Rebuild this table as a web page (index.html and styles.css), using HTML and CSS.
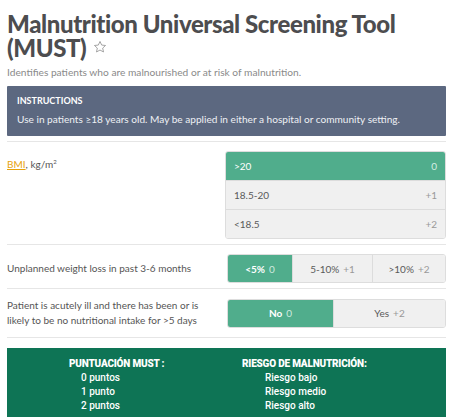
FILE: index.html
```html
<!DOCTYPE html>
<html>
<head>
<meta charset="utf-8">
<link rel="stylesheet" href="styles.css">
</head>
<body>
<div class="page">
  <h1 class="title">Malnutrition Universal Screening Tool (MUST) <svg class="star" viewBox="0 0 24 24" width="14" height="14"><path d="M12 2.5l2.9 6.2 6.6.7-4.9 4.5 1.4 6.6L12 17.2l-6 3.3 1.4-6.6-4.9-4.5 6.6-.7z" fill="none" stroke="#888" stroke-width="1.3" stroke-linejoin="round"/></svg></h1>
  <p class="subtitle">Identifies patients who are malnourished or at risk of malnutrition.</p>
  <div class="instructions">
    <div class="inst-head">INSTRUCTIONS</div>
    <div class="inst-text">Use in patients ≥18 years old. May be applied in either a hospital or community setting.</div>
  </div>
  <div class="row row-bmi">
    <div class="label"><span class="bmi">BMI</span>, kg/m<sup>2</sup></div>
    <div class="stack">
      <div class="opt active"><span>&gt;20</span><span class="pts">0</span></div>
      <div class="opt"><span>18.5-20</span><span class="pts">+1</span></div>
      <div class="opt"><span>&lt;18.5</span><span class="pts">+2</span></div>
    </div>
  </div>
  <div class="row row-center">
    <div class="label">Unplanned weight loss in past 3-6 months</div>
    <div class="seg seg3">
      <div class="btn active">&lt;5% <span class="pts">0</span></div>
      <div class="btn">5-10% <span class="pts">+1</span></div>
      <div class="btn">&gt;10% <span class="pts">+2</span></div>
    </div>
  </div>
  <div class="row row-center">
    <div class="label">Patient is acutely ill and there has been or is likely to be no nutritional intake for &gt;5 days</div>
    <div class="seg seg2">
      <div class="btn active bold">No <span class="pts">0</span></div>
      <div class="btn">Yes <span class="pts">+2</span></div>
    </div>
  </div>
  <div class="result">
    <div class="col col1">
      <div class="rhead">PUNTUACIÓN MUST :</div>
      <div class="ritem">0 puntos</div>
      <div class="ritem">1 punto</div>
      <div class="ritem">2 puntos</div>
    </div>
    <div class="col col2">
      <div class="rhead">RIESGO DE MALNUTRICIÓN:</div>
      <div class="ritem">Riesgo bajo</div>
      <div class="ritem">Riesgo medio</div>
      <div class="ritem">Riesgo alto</div>
    </div>
  </div>
</div>
</body>
</html>
```
FILE: styles.css
```css
html, body {
  margin: 0;
  padding: 0;
  background: #fff;
}
body {
  font-family: Lato, "Open Sans", sans-serif;
  color: #4a4a4a;
  overflow: hidden;
}
.page {
  padding: 12px 6px 0 7px;
}
.title {
  margin: 0;
  font-size: 24px;
  line-height: 24px;
  font-weight: 900;
  color: #4d4d4f;
  letter-spacing: -0.4px;
}
.star {
  vertical-align: 3px;
  margin-left: 1px;
}
.subtitle {
  margin: 6px 0 0;
  font-size: 10.2px;
  color: #8a8a8a;
  line-height: 12px;
}
.instructions {
  margin-top: 8px;
  background: #5c6880;
  color: #fff;
  padding: 9px 10px 9px 10px;
  border-radius: 1px;
  height: 50px;
  box-sizing: border-box;
}
.inst-head {
  font-size: 9px;
  font-weight: 700;
  line-height: 12px;
}
.inst-text {
  margin-top: 6px;
  font-size: 10.1px;
  line-height: 12px;
  color: #eef0f4;
}
.row {
  display: flex;
  justify-content: space-between;
  border-top: 1px solid #e6e6e6;
  margin-top: 5px;
  padding-top: 9px;
  padding-bottom: 0;
}
.row-center {
  align-items: center;
}
.label {
  font-size: 10px;
  line-height: 15px;
  color: #555;
  width: 205px;
}
.row-bmi .label {
  padding-top: 6px;
}
.bmi {
  color: #e7a20c;
  text-decoration: underline;
}
sup {
  font-size: 6px;
  vertical-align: 4px;
  line-height: 0;
}
.stack {
  width: 219px;
  border: 1px solid #ddd;
  border-radius: 3px;
  overflow: hidden;
}
.opt {
  display: flex;
  justify-content: space-between;
  align-items: center;
  height: 28px;
  padding: 0 8px;
  font-size: 10px;
  background: #f0f0f0;
  color: #5a5a5a;
  border-top: 1px solid #dcdcdc;
}
.opt:first-child {
  border-top: none;
}
.opt .pts {
  color: #999;
}
.opt.active {
  background: #50ad8c;
  color: #fff;
}
.opt.active .pts {
  color: #d5ede4;
}
.seg {
  width: 219px;
  height: 29px;
  flex-shrink: 0;
  display: flex;
  border: 1px solid #ddd;
  border-radius: 3px;
  overflow: hidden;
  box-sizing: border-box;
}
.btn {
  display: flex;
  align-items: center;
  justify-content: center;
  background: #f0f0f0;
  font-size: 10px;
  color: #5a5a5a;
  border-left: 1px solid #dcdcdc;
  gap: 4px;
}
.btn:first-child {
  border-left: none;
}
.btn .pts {
  color: #999;
}
.btn.active {
  background: #50ad8c;
  color: #fff;
  font-weight: 700;
}
.btn.active .pts {
  color: #cfe9df;
  font-weight: 400;
}
.seg3 .btn:nth-child(1) { width: 64px; }
.seg3 .btn:nth-child(2) { width: 79px; }
.seg3 .btn:nth-child(3) { flex: 1; }
.seg2 .btn:nth-child(1) { width: 105px; }
.seg2 .btn:nth-child(2) { flex: 1; }
.result {
  margin-top: 9px;
  border-top: 1px solid #e6e6e6;
  display: flex;
  background: linear-gradient(#fff, #fff) top / 100% 10px no-repeat, #0e7455;
  height: 80px;
  box-sizing: border-box;
  padding: 19px 0 0 62px;
  font-family: Roboto, sans-serif;
}
.col {
  color: #fff;
}
.col1 { width: 173px; }
.rhead {
  font-size: 10px;
  font-weight: 900;
  line-height: 14px;
  letter-spacing: -0.2px;
}
.ritem {
  font-size: 10px;
  font-weight: 500;
  line-height: 14px;
}
.col1 .ritem { padding-left: 12px; }
.col2 .ritem { padding-left: 23px; }
```
